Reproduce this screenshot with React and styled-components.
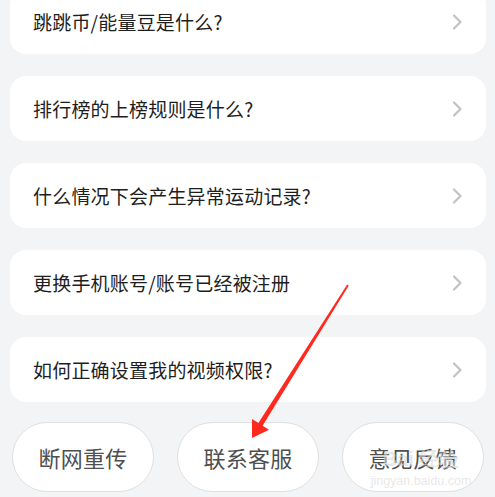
import React from 'react';
import styled, { createGlobalStyle } from 'styled-components';

const GlobalStyle = createGlobalStyle`
  html, body {
    margin: 0;
    padding: 0;
    background: #f3f4f6;
    font-family: "Noto Sans CJK SC", "Noto Sans", sans-serif;
  }
`;

const Page = styled.div`
  position: relative;
  width: 495px;
  height: 497px;
  overflow: hidden;
  background: #f3f4f6;
`;

const List = styled.div`
  display: flex;
  flex-direction: column;
  gap: 22px;
  margin-top: -11px;
  padding: 0 9px 0 10px;
`;

const Card = styled.div`
  display: flex;
  align-items: center;
  justify-content: space-between;
  height: 65px;
  padding: 0 23px 0 23px;
  background: #fff;
  border-radius: 16px;
`;

const Question = styled.span`
  font-size: 19px;
  color: #1e1e1e;
  letter-spacing: 0.2px;
`;

const Buttons = styled.div`
  display: flex;
  gap: 23px;
  margin-top: 20px;
  padding-left: 12px;
`;

const Pill = styled.button`
  width: 142px;
  height: 70px;
  border-radius: 35px;
  border: 1px solid #e0e0e0;
  background: #fff;
  font-family: inherit;
  font-size: 22px;
  line-height: 1;
  color: #4f4f4f;
  padding: 0;
  letter-spacing: 0.3px;
`;

const Arrow = styled.svg`
  position: absolute;
  left: 0;
  top: 0;
  pointer-events: none;
`;

const Watermark = styled.div`
  position: absolute;
  left: 373px;
  top: 449px;
  width: 96px;
  display: flex;
  flex-direction: column;
  align-items: center;
  color: rgba(215, 215, 215, 0.6);
  pointer-events: none;
  line-height: 1;
`;

const MarkTitle = styled.span`
  font-family: "Liberation Sans", sans-serif;
  font-weight: bold;
  font-size: 20px;
`;

const MarkUrl = styled.span`
  margin-top: 6px;
  font-family: "Liberation Sans", sans-serif;
  font-size: 12.5px;
`;

const Chevron = () => (
  <svg width="12" height="18" viewBox="0 0 12 18">
    <path d="M3 2.5 L9.5 9 L3 15.5" fill="none" stroke="#c2c2c2" strokeWidth="2.2" strokeLinecap="round" strokeLinejoin="round" />
  </svg>
);

const questions = [
  '跳跳币/能量豆是什么?',
  '排行榜的上榜规则是什么?',
  '什么情况下会产生异常运动记录?',
  '更换手机账号/账号已经被注册',
  '如何正确设置我的视频权限?',
];

const actions = ['断网重传', '联系客服', '意见反馈'];

export default function App() {
  return (
    <Page>
      <GlobalStyle />
      <List>
        {questions.map((q) => (
          <Card key={q}>
            <Question>{q}</Question>
            <Chevron />
          </Card>
        ))}
      </List>
      <Buttons>
        {actions.map((a) => (
          <Pill key={a}>{a}</Pill>
        ))}
      </Buttons>
      <Watermark>
        <MarkTitle>Bai 经验</MarkTitle>
        <MarkUrl>jingyan.baidu.com</MarkUrl>
      </Watermark>
      <Arrow width="495" height="497" viewBox="0 0 495 497">
        <polygon
          points="348.8,285.5 347.2,284.5 258.4,423.1 252,419.1 252,438 269,429.7 262.6,425.7"
          fill="#ff2a1f"
        />
      </Arrow>
    </Page>
  );
}
